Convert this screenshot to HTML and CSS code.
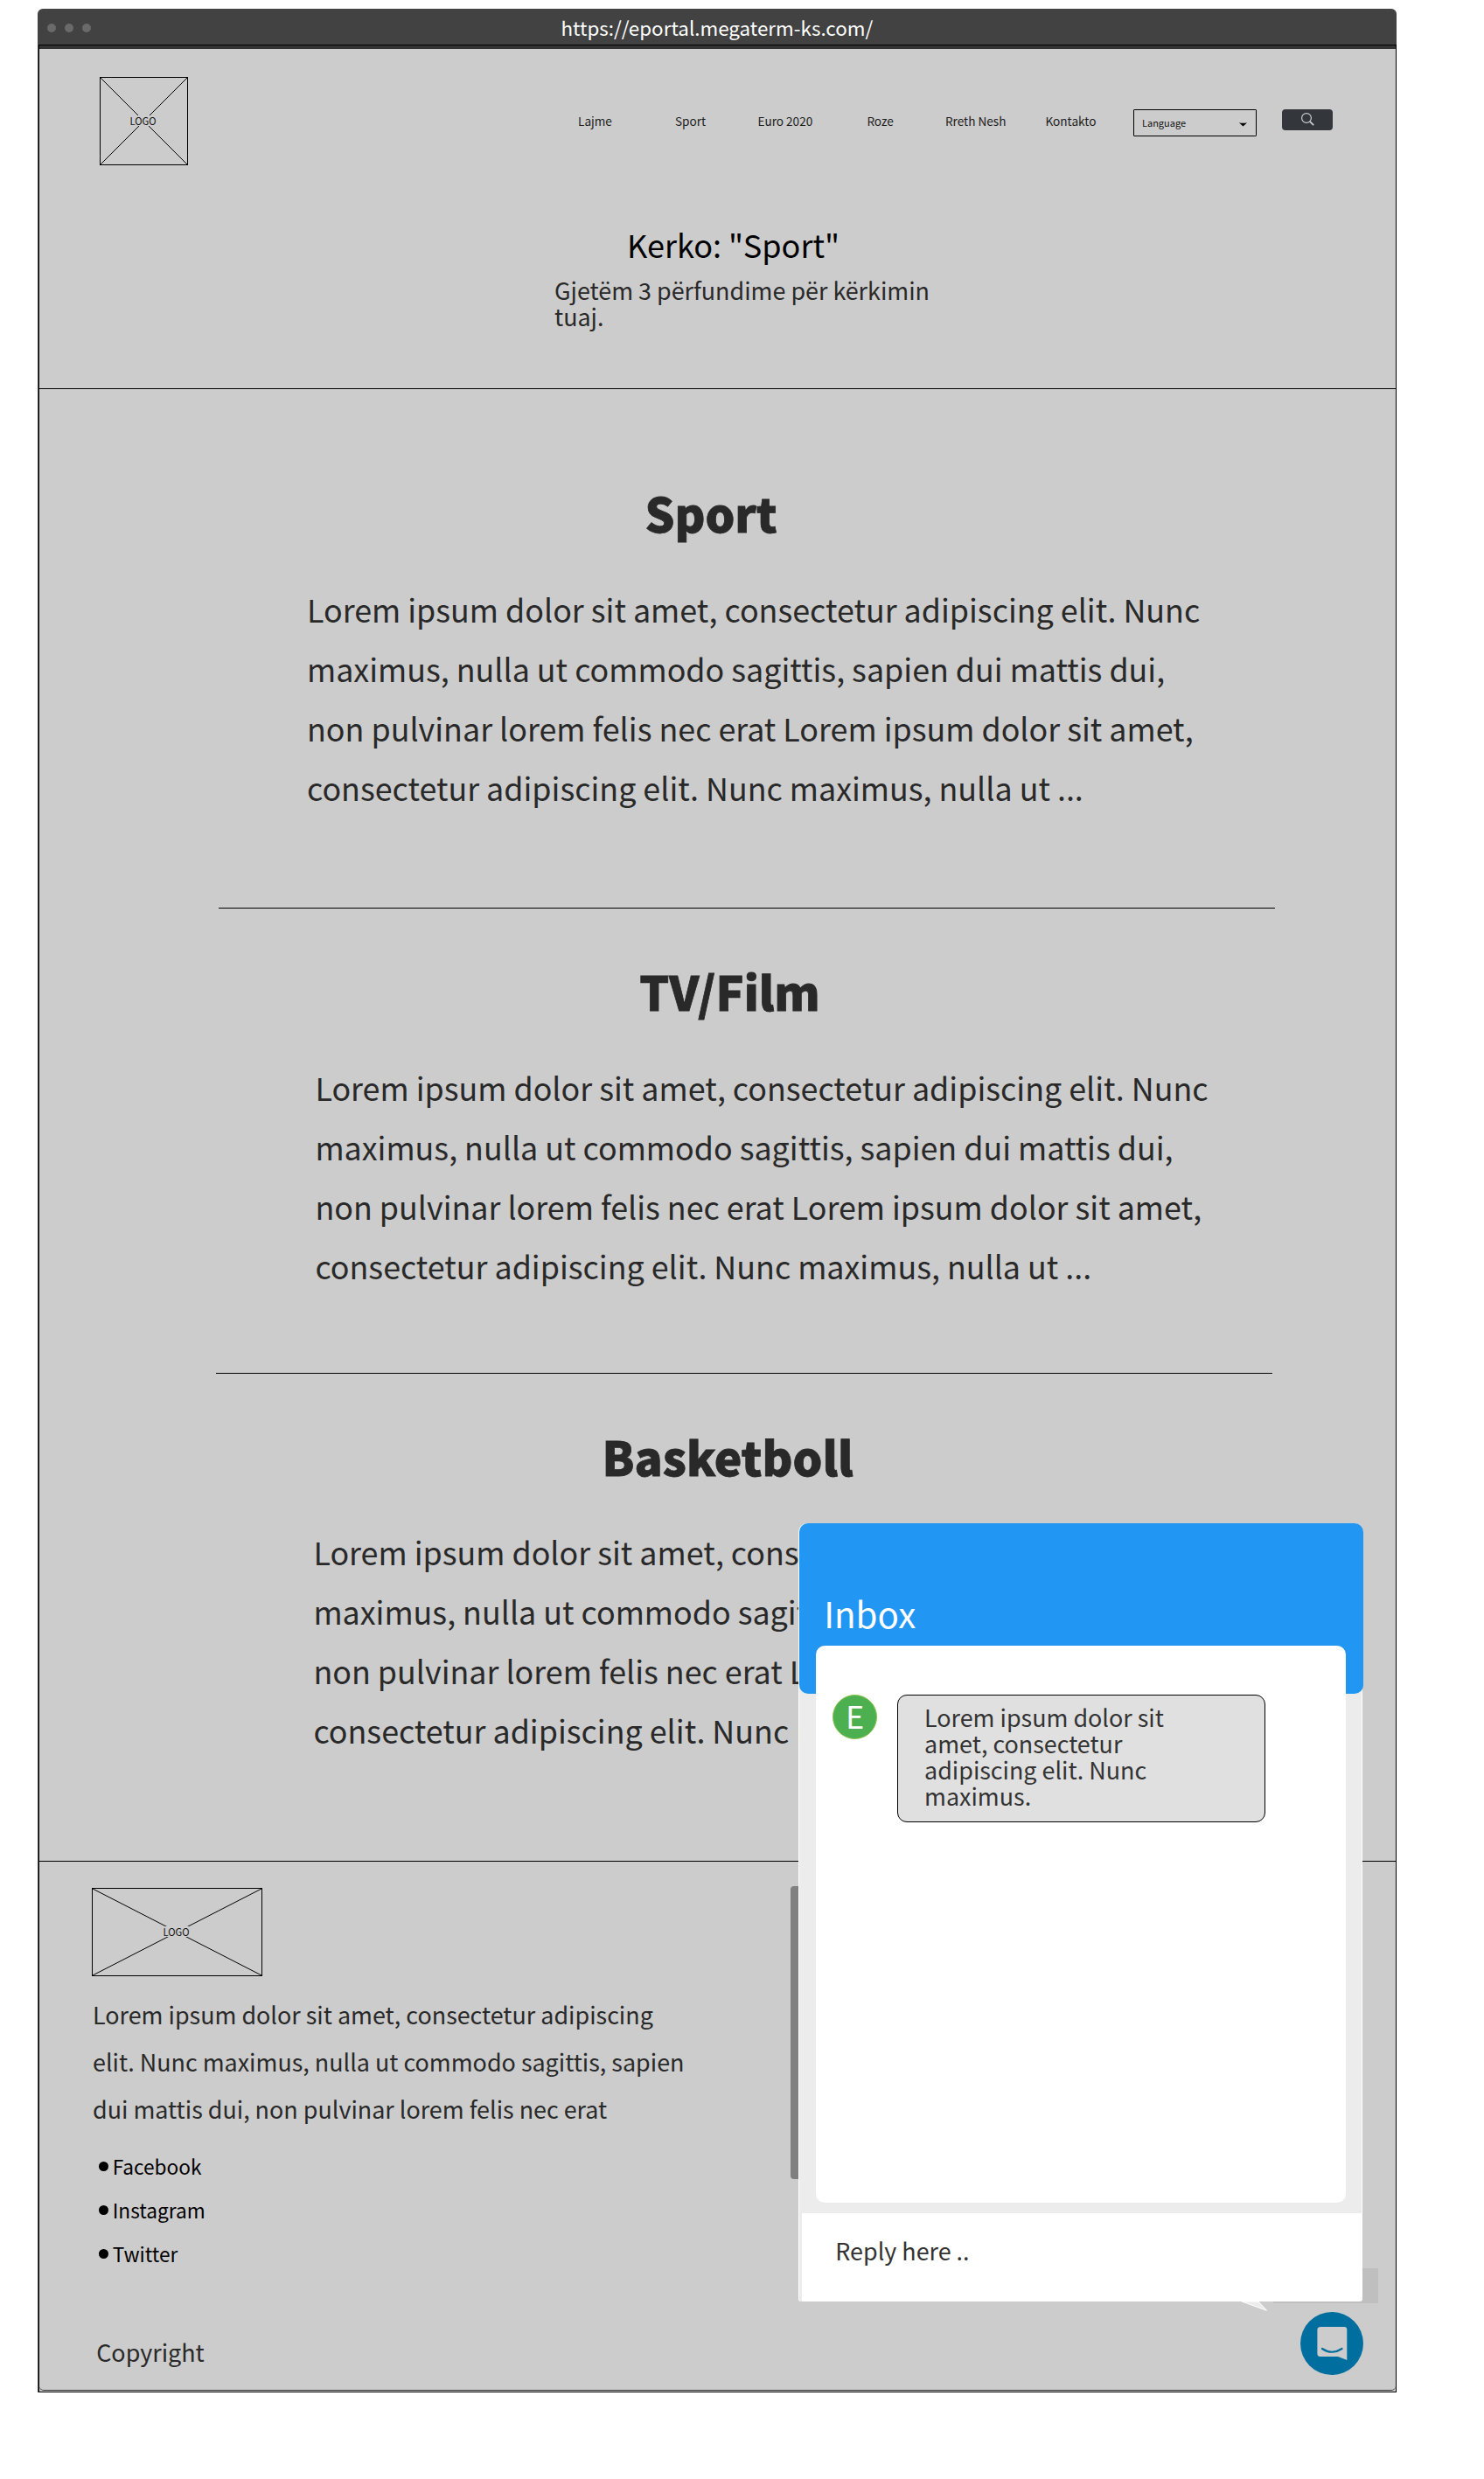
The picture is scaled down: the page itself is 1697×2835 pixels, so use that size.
FILE: index.html
```html
<!DOCTYPE html>
<html lang="sq">
<head>
<meta charset="utf-8">
<title>ePortal - Kerko</title>
<link rel="stylesheet" href="styles.css">
</head>
<body>
<div class="window">
  <div class="titlebar">
    <span class="dot"></span><span class="dot"></span><span class="dot"></span>
    <span class="url">https://eportal.megaterm-ks.com/</span>
  </div>
  <div class="page">
    <div class="page-inner">
      <header class="hero">
        <div class="topbar">
          <div class="logo logo-square">
            <svg class="logo-cross" viewBox="0 0 99 99" preserveAspectRatio="none"><path d="M0 0L99 99M99 0L0 99"/></svg>
            <span class="logo-text">LOGO</span>
          </div>
          <nav class="nav">
            <a>Lajme</a><a>Sport</a><a>Euro 2020</a><a>Roze</a><a>Rreth Nesh</a><a>Kontakto</a>
          </nav>
          <div class="select">
            <span>Language</span>
            <svg class="caret" viewBox="0 0 9 5"><path d="M0 .3Q4.5 1.3 9 .3Q7 2.5 4.5 4.6Q2 2.5 0 .3Z"/></svg>
          </div>
          <button class="search" aria-label="Search">
            <svg class="search-icon" viewBox="0 0 15 15"><circle cx="6" cy="6" r="5.4"/><path d="M9.8 9.8L14.2 14.2"/></svg>
          </button>
        </div>
        <h1 class="search-title">Kerko: "Sport"</h1>
        <p class="search-sub">Gjetëm 3 përfundime për kërkimin tuaj.</p>
      </header>

      <article class="result result-first">
        <h2>Sport</h2>
        <p>Lorem ipsum dolor sit amet, consectetur adipiscing elit. Nunc maximus, nulla ut commodo sagittis, sapien dui mattis dui, non pulvinar lorem felis nec erat Lorem ipsum dolor sit amet, consectetur adipiscing elit. Nunc maximus, nulla ut ...</p>
      </article>
      <hr class="rule">
      <article class="result result-second">
        <h2>TV/Film</h2>
        <p>Lorem ipsum dolor sit amet, consectetur adipiscing elit. Nunc maximus, nulla ut commodo sagittis, sapien dui mattis dui, non pulvinar lorem felis nec erat Lorem ipsum dolor sit amet, consectetur adipiscing elit. Nunc maximus, nulla ut ...</p>
      </article>
      <hr class="rule rule-second">
      <article class="result result-third">
        <h2>Basketboll</h2>
        <p>Lorem ipsum dolor sit amet, consectetur adipiscing elit. Nunc maximus, nulla ut commodo sagittis, sapien dui mattis dui, non pulvinar lorem felis nec erat Lorem ipsum dolor sit amet, consectetur adipiscing elit. Nunc maximus, nulla ut ...</p>
      </article>

      <footer class="footer">
        <div class="logo logo-wide">
          <svg class="logo-cross" viewBox="0 0 193 99" preserveAspectRatio="none"><path d="M0 0L193 99M193 0L0 99"/></svg>
          <span class="logo-text">LOGO</span>
        </div>
        <p class="about">Lorem ipsum dolor sit amet, consectetur adipiscing elit. Nunc maximus, nulla ut commodo sagittis, sapien dui mattis dui, non pulvinar lorem felis nec erat</p>
        <ul class="social">
          <li>Facebook</li>
          <li>Instagram</li>
          <li>Twitter</li>
        </ul>
        <p class="copyright">Copyright</p>
      </footer>
    </div>
  </div>
</div>

<div class="map-block"></div>
<div class="shade"></div>
<svg class="tail" viewBox="0 0 32 14"><path d="M1 1H20L29.5 11.3Z"/></svg>

<section class="chat">
  <div class="chat-head">Inbox</div>
  <div class="chat-panel">
    <span class="avatar">E</span>
    <p class="bubble">Lorem ipsum dolor sit amet, consectetur adipiscing elit. Nunc maximus.</p>
  </div>
  <div class="reply">Reply here ..</div>
</section>

<svg class="launcher" viewBox="0 0 72 72">
  <circle cx="36" cy="36" r="36" fill="#006f9f"/>
  <path d="M23 17H50Q53.3 17 53.3 20.3V55L43 51H23Q19.4 51 19.4 47.5V20.5Q19.4 17 23 17Z" fill="#ccc"/>
  <path d="M25 42Q36 49.5 47.5 42" fill="none" stroke="#006f9f" stroke-width="2.2" stroke-linecap="round"/>
</svg>
</body>
</html>
```
FILE: styles.css
```css
* { box-sizing: border-box; }

body {
  position: relative;
  width: 1697px;
  height: 2835px;
  margin: 0;
  overflow: hidden;
  background: #fff;
  color: #292929;
  font-family: "Noto Sans CJK SC", "Noto Sans", sans-serif;
}

h1, h2, p, ul { margin: 0; padding: 0; font-weight: 400; }

/* Browser frame */
.window {
  width: 1554px;
  padding-top: 10px;
  margin-left: 43px;
}
.titlebar {
  display: flex;
  align-items: center;
  gap: 10px;
  height: 41px;
  padding-left: 11px;
  background: #424242;
  border-radius: 6px 6px 0 0;
}
.dot {
  width: 10px;
  height: 10px;
  margin-top: 2px;
  border-radius: 50%;
  background: #6a6a6a;
}
.url {
  margin-left: 527.5px;
  margin-top: 1px;
  color: #fff;
  font-size: 22.4px;
  line-height: 40px;
}
.page {
  width: 1553px;
  height: 2685px;
  margin-left: 1px;
  border: 1px solid #000;
  background: #ccc;
  box-shadow: -1px 0 0 #444;
}
.page-inner {
  height: 2682px;
  border-top: 4px solid #333;
  border-bottom: 1px solid #333;
  border-radius: 0 0 5px 5px;
}

/* Header */
.hero {
  height: 389px;
  padding-top: 32px;
  border-bottom: 1px solid #000;
}
.topbar {
  display: flex;
  align-items: flex-start;
  height: 101px;
  padding-left: 69px;
}
.logo {
  display: grid;
  place-items: center;
  border: 1px solid #000;
}
.logo > * { grid-area: 1 / 1; }
.logo-square { width: 101px; height: 101px; }
.logo-wide { width: 195px; height: 101px; }
.logo-cross {
  width: 100%;
  height: 99px;
  fill: none;
  stroke: #000;
  stroke-width: 1;
}
.logo-text {
  position: relative;
  margin: 0 2px 2px 0;
  background: #ccc;
  color: #111;
  font-size: 11.2px;
  line-height: 12px;
}
.nav {
  display: grid;
  grid-template-columns: 111px 94.4px 125px 89.5px 114.5px 100.6px;
  margin: 40px 0 0 446px;
  color: #1c1c1c;
  font-size: 13.6px;
  line-height: 20px;
  white-space: nowrap;
}
.select {
  display: flex;
  justify-content: space-between;
  width: 141px;
  height: 31px;
  margin-top: 37px;
  padding: 0 10px 0 9px;
  border: 1px solid #000;
  border-radius: 1px;
  color: #111;
  font-size: 11px;
  line-height: 29px;
}
.caret { width: 9px; height: 5px; margin-top: 14px; }
.search {
  display: flex;
  justify-content: center;
  width: 58px;
  height: 24px;
  margin: 37px 0 0 29px;
  padding: 4px 0 0 1px;
  border: 0;
  border-radius: 4px;
  background: #33363b;
}
.search-icon {
  width: 15px;
  height: 15px;
  fill: none;
  stroke: #ccc;
  stroke-width: 1.2;
}
.search-icon path { stroke-width: 1.8; }
.search-title {
  margin: 70.3px 0 0 672px;
  color: #000;
  font-size: 36.05px;
  line-height: 40px;
}
.search-sub {
  width: 440px;
  margin: 18px 0 0 589px;
  font-size: 26.9px;
  line-height: 30px;
}

/* Search results */
.result h2 {
  font-size: 53.2px;
  font-weight: 900;
  line-height: 60px;
  -webkit-text-stroke: 0.8px #292929;
}
.result p {
  width: 1040px;
  margin-top: 46px;
  font-size: 35.85px;
  line-height: 68px;
}
.result-first { height: 593px; padding: 111px 0 0 306px; }
.result-first h2 { padding-left: 386.5px; }
.result-first p { margin-top: 45.6px; }
.result-second { height: 531px; padding: 63.7px 0 0 315.4px; }
.result-second h2 { padding-left: 370.9px; }
.result-second p { margin-top: 46.6px; }
.result-third {
  height: 558px;
  padding: 64px 0 0 313.4px;
  border-bottom: 1px solid #000;
}
.result-third h2 { padding-left: 330.2px; }
.result-third p { margin-top: 45.4px; }
.rule {
  width: 1208px;
  height: 1px;
  margin: 0 0 0 205px;
  border: 0;
  background: #000;
}
.rule-second { margin-left: 202px; }

/* Footer */
.footer { padding: 30px 0 0 60px; }
.about {
  width: 685px;
  margin: 16.5px 0 0 1px;
  font-size: 26.9px;
  line-height: 54px;
}
.social {
  margin: 14.8px 0 0 7.7px;
  color: #000;
  font-size: 22.65px;
  line-height: 50px;
  list-style: none;
}
.social li {
  display: flex;
  align-items: center;
  gap: 5px;
}
.social li::before {
  content: "";
  width: 11px;
  height: 11px;
  margin-bottom: 2px;
  border-radius: 50%;
  background: #000;
}
.copyright {
  margin: 72.2px 0 0 5.2px;
  font-size: 26.9px;
  line-height: 30px;
}

/* Elements lying over the page */
.map-block {
  position: absolute;
  left: 904px;
  top: 2157px;
  width: 60px;
  height: 335px;
  border-radius: 4px;
  background: #808080;
}
.shade {
  position: absolute;
  left: 1456px;
  top: 2594px;
  width: 120px;
  height: 40px;
  background: #bfbfbf;
}
.tail {
  position: absolute;
  left: 1419px;
  top: 2631px;
  width: 32px;
  height: 14px;
  fill: #ececec;
  stroke: #fff;
  stroke-width: 1;
}
.launcher {
  position: absolute;
  left: 1487px;
  top: 2644px;
  width: 72px;
  height: 72px;
}

/* Chat window */
.chat {
  position: absolute;
  left: 913px;
  top: 1742px;
  width: 645px;
  height: 890px;
  border: solid #fff;
  border-width: 0 1px;
  border-radius: 10px 10px 3px 3px;
  background: #ececec;
}
.chat-head {
  width: 645px;
  height: 195px;
  padding: 78.4px 0 0 28.2px;
  border-radius: 10px;
  background: #2196f3;
  color: #fff;
  font-size: 40.3px;
  line-height: 50px;
}
.chat-panel {
  display: flex;
  align-items: flex-start;
  gap: 23px;
  width: 606px;
  height: 637px;
  margin: -55px 0 0 19px;
  padding: 56px 0 0 19px;
  border-radius: 10px;
  background: #fff;
}
.avatar {
  width: 51px;
  height: 51px;
  border: 1px solid #8bc34a;
  border-radius: 50%;
  background: #4caf50;
  color: #fff;
  font-size: 36px;
  line-height: 44px;
  text-align: center;
}
.bubble {
  width: 421px;
  height: 146px;
  padding: 10.4px 90px 0 30px;
  border: 1px solid #000;
  border-radius: 11px;
  background: #e0e0e0;
  color: #333;
  font-size: 26.9px;
  line-height: 30px;
}
.reply {
  height: 101px;
  margin: 12px 0 0 3px;
  padding: 28.4px 0 0 38.3px;
  border-radius: 0 0 3px 0;
  background: #fff;
  color: #333;
  font-size: 26.9px;
  line-height: 30px;
}
```
